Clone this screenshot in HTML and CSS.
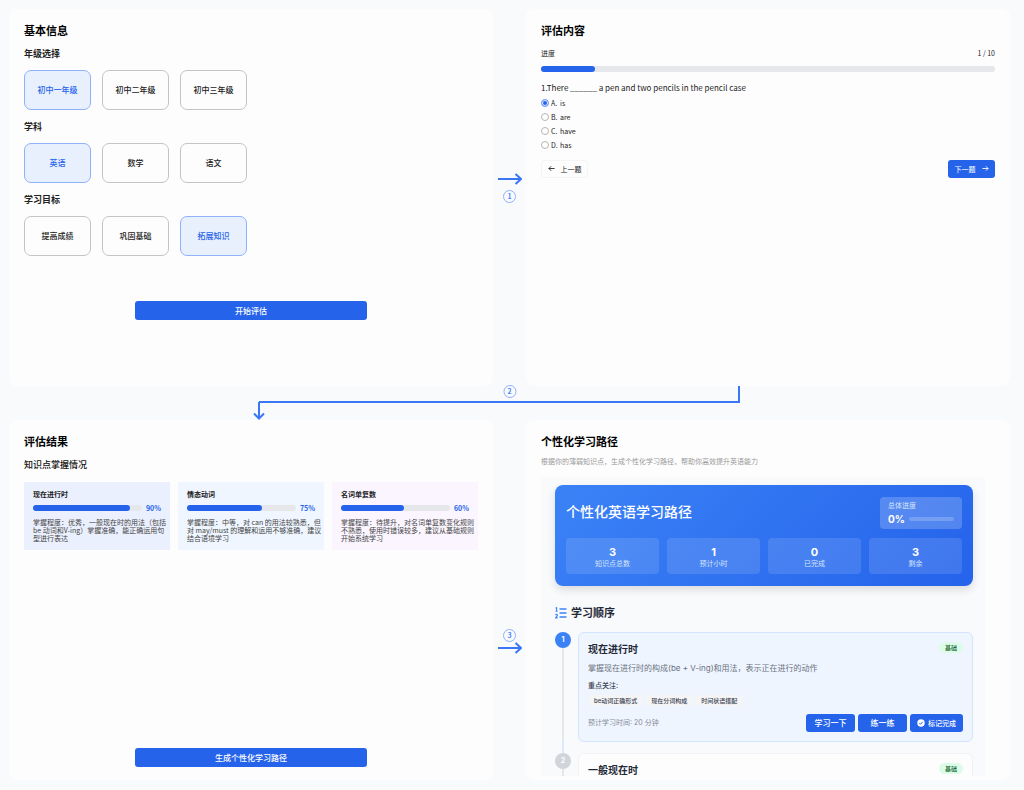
FILE: index.html
```html
<!DOCTYPE html>
<html lang="zh-CN">
<head>
    <meta charset="UTF-8">
    <meta name="viewport" content="width=device-width, initial-scale=1.0">
    <title>个性化学习路径</title>
    <link rel="stylesheet" href="styles.css">
</head>
<body>
<main class="board">
    <!-- Step 1: basic info -->
    <section class="panel panel-info">
        <h2>基本信息</h2>
        <h3>年级选择</h3>
        <div class="options">
            <button type="button" class="option selected">初中一年级</button>
            <button type="button" class="option">初中二年级</button>
            <button type="button" class="option">初中三年级</button>
        </div>
        <h3>学科</h3>
        <div class="options">
            <button type="button" class="option selected">英语</button>
            <button type="button" class="option">数学</button>
            <button type="button" class="option">语文</button>
        </div>
        <h3>学习目标</h3>
        <div class="options">
            <button type="button" class="option">提高成绩</button>
            <button type="button" class="option">巩固基础</button>
            <button type="button" class="option selected">拓展知识</button>
        </div>
        <button type="button" class="btn btn-wide">开始评估</button>
    </section>

    <div class="gutter gutter-top">
        <svg class="arrow" viewBox="0 0 24 12"><path d="M0 6H23M17.500 1L23 6L17.500 11"/></svg>
        <span class="step">1</span>
    </div>

    <!-- Step 2: quiz -->
    <section class="panel">
        <h2>评估内容</h2>
        <div class="progress-label"><span>进度</span><span>1 / 10</span></div>
        <div class="bar"><div class="bar-fill" style="width: 12%"></div></div>
        <form class="quiz">
            <p class="question">1.There ______ a pen and two pencils in the pencil case</p>
            <label class="answer"><input type="radio" name="q1" checked><span class="letter">A.</span>is</label>
            <label class="answer"><input type="radio" name="q1"><span class="letter">B.</span>are</label>
            <label class="answer"><input type="radio" name="q1"><span class="letter">C.</span>have</label>
            <label class="answer"><input type="radio" name="q1"><span class="letter">D.</span>has</label>
            <div class="quiz-nav">
                <button type="button" class="btn btn-nav btn-light">
                    <svg viewBox="0 0 8 8"><path d="M7.500 4H1M3.500 1.500L1 4L3.500 6.500"/></svg>上一题
                </button>
                <button type="button" class="btn btn-nav">
                    下一题<svg viewBox="0 0 8 8"><path d="M.5 4H7M4.500 1.500L7 4L4.500 6.500"/></svg>
                </button>
            </div>
        </form>
    </section>

    <div class="connector">
        <div class="connector-upper"></div>
        <div class="connector-lower">
            <svg viewBox="0 0 12 18"><path d="M6 0V16M1 11.500L6 16.500L11 11.500"/></svg>
        </div>
        <span class="step">2</span>
    </div>

    <!-- Step 3: results -->
    <section class="panel panel-result">
        <h2>评估结果</h2>
        <h3>知识点掌握情况</h3>
        <div class="results">
            <article class="result indigo">
                <h4>现在进行时</h4>
                <div class="score"><div class="bar"><div class="bar-fill" style="width: 89%"></div></div><b>90%</b></div>
                <p>掌握程度：优秀，一般现在时的用法（包括<br>be 动词和V-ing）掌握准确，能正确运用句<br>型进行表达</p>
            </article>
            <article class="result blue">
                <h4>情态动词</h4>
                <div class="score"><div class="bar"><div class="bar-fill" style="width: 69%"></div></div><b>75%</b></div>
                <p>掌握程度：中等，对 can 的用法较熟悉，但<br>对 may/must 的理解和运用不够准确，建议<br>结合语境学习</p>
            </article>
            <article class="result purple">
                <h4>名词单复数</h4>
                <div class="score"><div class="bar"><div class="bar-fill" style="width: 58%"></div></div><b>60%</b></div>
                <p>掌握程度：待提升，对名词单复数变化规则<br>不熟悉，使用时错误较多，建议从基础规则<br>开始系统学习</p>
            </article>
        </div>
        <button type="button" class="btn btn-wide">生成个性化学习路径</button>
    </section>

    <div class="gutter gutter-bottom">
        <span class="step">3</span>
        <svg class="arrow" viewBox="0 0 24 12"><path d="M0 6H23M17.500 1L23 6L17.500 11"/></svg>
    </div>

    <!-- Step 4: learning path -->
    <section class="panel panel-path">
        <h2>个性化学习路径</h2>
        <p class="hint">根据你的薄弱知识点，生成个性化学习路径，帮助你高效提升英语能力</p>
        <div class="path">
            <div class="hero">
                <div class="hero-head">
                    <h1>个性化英语学习路径</h1>
                    <div class="total">
                        <span>总体进度</span>
                        <div class="total-row"><b>0%</b><div class="total-bar"></div></div>
                    </div>
                </div>
                <div class="stats">
                    <div class="stat"><b>3</b><span>知识点总数</span></div>
                    <div class="stat"><b>1</b><span>预计小时</span></div>
                    <div class="stat"><b>0</b><span>已完成</span></div>
                    <div class="stat"><b>3</b><span>剩余</span></div>
                </div>
            </div>

            <h3 class="order-title">
                <svg viewBox="0 0 12 12">
                    <path d="M4.500 2H11.500M4.500 6H11.500M4.500 10H11.500" stroke-width="1.600"/>
                    <path d="M.6 1.200L1.600 .7V4.300M.5 4.300H2.700M.5 7.900C1 7 2.600 7.200 2.400 8.400C2.300 9.200 1.200 9.800 .6 10.900H2.700" stroke-width="1.100"/>
                </svg>
                学习顺序
            </h3>

            <div class="lesson">
                <div class="rail"><span class="node active">1</span></div>
                <article class="lesson-card current">
                    <div class="lesson-head"><h4>现在进行时</h4><span class="level">基础</span></div>
                    <p class="lesson-desc">掌握现在进行时的构成(be + V-ing)和用法，表示正在进行的动作</p>
                    <p class="focus">重点关注:</p>
                    <div class="tags"><span>be动词正确形式</span><span>现在分词构成</span><span>时间状语搭配</span></div>
                    <div class="lesson-foot">
                        <span class="time">预计学习时间: 20 分钟</span>
                        <button type="button" class="btn btn-small">学习一下</button>
                        <button type="button" class="btn btn-small">练一练</button>
                        <button type="button" class="btn btn-small btn-done">
                            <svg viewBox="0 0 8 8"><circle cx="4" cy="4" r="3.700"/><path d="M2.300 4.100L3.500 5.300L5.700 2.900"/></svg>标记完成
                        </button>
                    </div>
                </article>
            </div>
            <div class="lesson">
                <div class="rail"><span class="node">2</span></div>
                <article class="lesson-card">
                    <div class="lesson-head"><h4>一般现在时</h4><span class="level">基础</span></div>
                </article>
            </div>
        </div>
    </section>
</main>
</body>
</html>
```

FILE: styles.css
```css
* {
    box-sizing: border-box;
}
body {
    margin: 0;
    background-color: #f8fafc;
    color: #222;
    font-family: "Noto Sans CJK SC", sans-serif;
    font-size: 7px;
    line-height: 10px;
}
h1, h2, h3, h4, p {
    margin: 0;
}
button, input {
    font-family: inherit;
    margin: 0;
}
.board {
    display: grid;
    grid-template-columns: 1fr 33px 1fr;
    padding: 9px 14px 10px 9px;
}
.panel {
    min-width: 0;
    padding: 13px 15px 0;
    background-color: #fdfdfd;
    border-radius: 8px;
}
.panel h2 {
    font-size: 11px;
    line-height: 16px;
    font-weight: 700;
    color: #000;
}
.panel h3 {
    margin-top: 9px;
    font-size: 9px;
    line-height: 14px;
    font-weight: 500;
    color: #111;
}

/* Buttons */
.btn {
    display: flex;
    align-items: center;
    justify-content: center;
    padding: 0 0 1px;
    border: none;
    border-radius: 3px;
    background-color: #2563eb;
    color: #fff;
    cursor: pointer;
}
.btn:hover {
    background-color: #1d4ed8;
}
.btn svg {
    width: 8px;
    height: 8px;
    fill: none;
    stroke: currentColor;
}
.btn-wide {
    width: 51%;
    height: 19px;
    font-size: 8px;
    font-weight: 500;
}

/* Basic info */
.panel-info {
    padding-bottom: 66px;
}
.panel-info h3 {
    font-weight: 700;
    color: #222;
}
.options {
    display: flex;
    gap: 11px;
    margin: 9px 0 10px;
}
.panel-info .options + h3 {
    margin-top: 0;
}
.option {
    width: 67px;
    height: 40px;
    padding: 0 0 2px;
    border: 1px solid #c4c4c4;
    border-radius: 7px;
    background-color: #fdfdfd;
    color: #222;
    font-size: 8px;
    font-weight: 500;
    cursor: pointer;
}
.option.selected {
    border-color: #8fb2fb;
    background-color: #e8effd;
    color: #2563eb;
}
.panel-info .btn-wide {
    margin: 45px auto 0;
}

/* Arrows between panels */
.gutter {
    display: flex;
    flex-direction: column;
    align-items: center;
}
.gutter-top {
    padding-top: 164px;
    gap: 5px;
}
.gutter-bottom {
    padding-top: 209px;
}
.arrow {
    width: 24px;
    height: 12px;
}
.arrow, .connector svg {
    fill: none;
    stroke: #3b76f6;
    stroke-width: 2;
}
.step {
    width: 13px;
    height: 13px;
    border: 1px solid #8fb2fb;
    border-radius: 50%;
    color: #4f83f5;
    font-size: 7px;
    font-weight: 700;
    line-height: 11px;
    text-align: center;
}
.connector {
    position: relative;
    grid-column: 1 / -1;
    height: 34px;
}
.connector-upper {
    height: 17px;
    margin: 0 27% 0 25%;
    border-right: 2px solid #3b76f6;
    border-bottom: 2px solid #3b76f6;
}
.connector-lower {
    margin: -1px 0 0 25%;
}
.connector-lower svg {
    display: block;
    width: 12px;
    height: 18px;
    margin-left: -6px;
}
.connector .step {
    position: absolute;
    top: -1px;
    left: 50%;
    transform: translateX(-50%);
}

/* Progress bars */
.bar {
    height: 6px;
    border-radius: 3px;
    background-color: #e5e7eb;
}
.bar-fill {
    height: 100%;
    border-radius: 3px;
    background-color: #2563eb;
}

/* Quiz */
.progress-label {
    display: flex;
    justify-content: space-between;
    margin: 9px 0 7px;
    line-height: 12px;
}
.question {
    margin: 10px 0 2px;
    font-size: 8px;
    line-height: 12px;
}
.answer {
    display: flex;
    align-items: center;
    height: 14px;
}
.answer input {
    appearance: none;
    width: 8px;
    height: 8px;
    margin-right: 2px;
    border: 1px solid #b5b5b5;
    border-radius: 50%;
    background-color: #fff;
}
.answer input:checked {
    border-color: #7da5f8;
    background-color: #2563eb;
    box-shadow: inset 0 0 0 1px #e8effd;
}
.letter {
    width: 9px;
}
.quiz-nav {
    display: flex;
    justify-content: space-between;
    margin-top: 8px;
}
.btn-nav {
    gap: 6px;
    width: 47px;
    height: 18px;
    font-size: 7px;
}
.btn-nav svg {
    width: 7px;
    height: 7px;
}
.btn-light {
    border: 1px solid #f5f5f5;
    background-color: #fdfdfd;
    color: #222;
}
.btn-light:hover {
    background-color: #f3f4f6;
}

/* Results */
.panel-result {
    display: flex;
    flex-direction: column;
    padding-bottom: 13px;
}
.panel-result .btn-wide {
    margin: auto auto 0;
}
.results {
    display: grid;
    grid-template-columns: repeat(3, 1fr);
    gap: 8px;
    margin-top: 10px;
}
.result {
    min-width: 0;
    padding: 8px 9px;
    line-height: 8px;
}
.result h4 {
    font-size: 7px;
    font-weight: 700;
}
.result p {
    color: #444;
    white-space: nowrap;
}
.indigo {
    background-color: #ebf0fe;
}
.blue {
    background-color: #eff6ff;
}
.purple {
    background-color: #faf5ff;
}
.score {
    display: flex;
    align-items: center;
    gap: 4px;
    height: 8px;
    margin: 6px 0;
}
.score .bar {
    flex: 1;
}
.score b {
    color: #2563eb;
    font-weight: 700;
}

/* Learning path */
.hint {
    margin: 7px 0 11px;
    color: #999;
}
.path {
    height: 299px;
    margin: 0 10px 4px 0;
    padding: 8px 12px 0 14px;
    overflow: hidden;
    background-color: #f9fafc;
    font-family: Inter, "Noto Sans CJK SC", sans-serif;
}
.hero {
    padding: 12px 11px;
    border-radius: 8px;
    background: linear-gradient(135deg, #3b82f6, #2563eb);
    box-shadow: 0 4px 8px rgba(0, 0, 0, 0.12);
    color: #fff;
}
.hero-head {
    display: flex;
    justify-content: space-between;
    margin-bottom: 9px;
}
.hero h1 {
    font-size: 14px;
    line-height: 30px;
    font-weight: 500;
}
.total {
    width: 82px;
    height: 32px;
    padding: 4px 8px;
    border-radius: 4px;
    background-color: rgba(255, 255, 255, 0.2);
}
.total span, .stat span {
    display: block;
    color: #d6e4fd;
}
.total-row {
    display: flex;
    align-items: center;
    gap: 4px;
    height: 16px;
}
.total-row b {
    font-size: 10px;
}
.total-bar {
    flex: 1;
    height: 4px;
    border-radius: 2px;
    background-color: rgba(255, 255, 255, 0.2);
}
.stats {
    display: grid;
    grid-template-columns: repeat(4, 1fr);
    gap: 8px;
}
.stat {
    height: 36px;
    padding-top: 7px;
    border-radius: 4px;
    background-color: rgba(255, 255, 255, 0.12);
    text-align: center;
}
.stat b {
    display: block;
    font-size: 11px;
    line-height: 14px;
}
.panel .order-title {
    display: flex;
    align-items: center;
    gap: 4px;
    margin: 19px 0 11px;
    font-size: 11px;
    line-height: 16px;
    font-weight: 700;
    color: #1f2937;
}
.order-title svg {
    width: 12px;
    height: 12px;
    fill: none;
    stroke: #3b82f6;
}
.lesson {
    display: flex;
    gap: 7px;
}
.rail {
    display: flex;
    flex-direction: column;
    align-items: center;
}
.rail::before {
    content: "";
    order: 1;
    flex: 1;
    width: 2px;
    background-color: #e5e7eb;
}
.rail::after {
    content: "";
    order: 2;
    width: 2px;
    height: 12px;
    background-color: #dbeafe;
}
.node {
    width: 16px;
    height: 16px;
    border-radius: 50%;
    background-color: #d1d5db;
    color: #fff;
    font-weight: 700;
    line-height: 16px;
    text-align: center;
}
.node.active {
    background-color: #3b82f6;
}
.lesson-card {
    flex: 1;
    margin-bottom: 11px;
    padding: 9px;
    border: 1px solid #f0f2f5;
    border-radius: 6px;
    background-color: #fdfdfd;
}
.lesson-card.current {
    border-color: #d3e4fe;
    background-color: #eff5ff;
}
.lesson-head {
    display: flex;
    justify-content: space-between;
    align-items: flex-start;
}
.lesson-head h4 {
    font-size: 10px;
    line-height: 14px;
    font-weight: 700;
    color: #1f2937;
}
.level {
    padding: 0 6px;
    border-radius: 6px;
    background-color: #dcfce7;
    color: #166534;
    font-size: 6px;
    line-height: 11px;
    font-weight: 500;
}
.lesson-desc {
    margin: 6px 0 7px;
    color: #6b7280;
    font-size: 8px;
    line-height: 12px;
}
.focus {
    color: #374151;
    font-weight: 500;
}
.tags {
    display: flex;
    gap: 2px;
    margin: 4px 0 8px;
}
.tags span {
    padding: 0 6px;
    border-radius: 6px;
    background-color: #f5f5f5;
    color: #374151;
    font-size: 6px;
    font-weight: 500;
    line-height: 11px;
}
.lesson-foot {
    display: flex;
    align-items: center;
    gap: 3px;
}
.time {
    margin-right: auto;
    color: #858c98;
}
.btn-small {
    width: 49px;
    height: 18px;
    font-size: 8px;
    font-weight: 500;
}
.btn-done {
    gap: 3px;
    width: 53px;
    font-size: 7px;
}
.btn-done circle {
    fill: #fff;
    stroke: none;
}
.btn-done path {
    stroke: #2563eb;
}
```
